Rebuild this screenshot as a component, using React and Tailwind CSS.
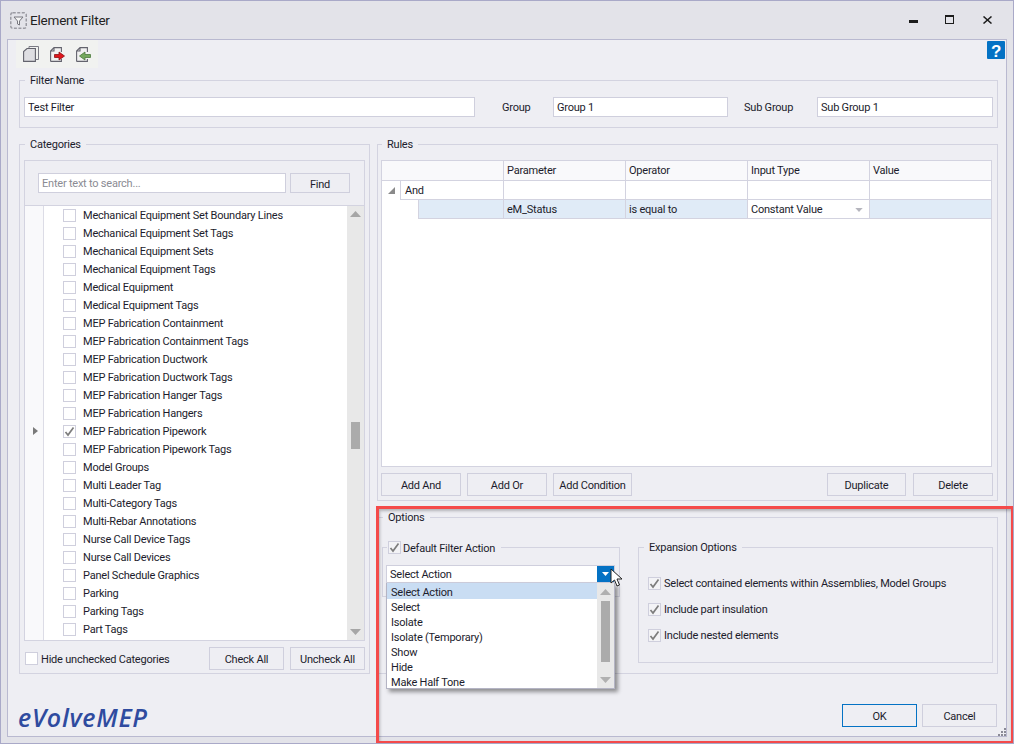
import React from "react";

const categories = [
  "Mechanical Equipment Set Boundary Lines",
  "Mechanical Equipment Set Tags",
  "Mechanical Equipment Sets",
  "Mechanical Equipment Tags",
  "Medical Equipment",
  "Medical Equipment Tags",
  "MEP Fabrication Containment",
  "MEP Fabrication Containment Tags",
  "MEP Fabrication Ductwork",
  "MEP Fabrication Ductwork Tags",
  "MEP Fabrication Hanger Tags",
  "MEP Fabrication Hangers",
  "MEP Fabrication Pipework",
  "MEP Fabrication Pipework Tags",
  "Model Groups",
  "Multi Leader Tag",
  "Multi-Category Tags",
  "Multi-Rebar Annotations",
  "Nurse Call Device Tags",
  "Nurse Call Devices",
  "Panel Schedule Graphics",
  "Parking",
  "Parking Tags",
  "Part Tags",
];

const actions = [
  "Select Action",
  "Select",
  "Isolate",
  "Isolate (Temporary)",
  "Show",
  "Hide",
  "Make Half Tone",
];

const Check = ({ checked, bg = "bg-white" }) => (
  <span className={`w-[13px] h-[13px] ${bg} shrink-0 border border-[#cfcfdd] flex items-center justify-center`}>
    {checked && (
      <svg width="11" height="11" viewBox="0 0 11 11">
        <path d="M1.5 6 L4 9 L9.5 1.5" fill="none" stroke="#7d7d7d" strokeWidth="1.7" />
      </svg>
    )}
  </span>
);

const Button = ({ children, className = "" }) => (
  <button className={`h-[23px] pt-[3px] border border-[#cfcfdd] bg-[#eeeef3] text-center whitespace-nowrap ${className}`}>
    {children}
  </button>
);

const Group = ({ legend, className = "", legendClass = "ml-[1px]", children }) => (
  <fieldset className={`border border-[#d3d3e0] min-w-0 ${className}`}>
    <legend className={`${legendClass} px-[5px] leading-[15px]`}>{legend}</legend>
    {children}
  </fieldset>
);

const TextInput = ({ value, className = "" }) => (
  <input
    readOnly
    value={value}
    className={`h-[20px] border border-[#cfcfdd] bg-white px-[3px] outline-none ${className}`}
  />
);

const UpArrow = ({ color = "#a6a6a6" }) => (
  <svg width="11" height="6" viewBox="0 0 11 6"><path d="M5.5 0 L11 6 H0 Z" fill={color} /></svg>
);
const DownArrow = ({ color = "#a6a6a6", w = 11, h = 6 }) => (
  <svg width={w} height={h} viewBox="0 0 11 6"><path d="M0 0 H11 L5.5 6 Z" fill={color} /></svg>
);

const PageIcon = ({ children }) => (
  <svg width="15" height="15" viewBox="0 0 15 15">
    <path d="M.6 14.4 V4 L4 .6 H11.4 V5 M.6 4 H4 V.6 M.6 14.4 H11.4 V12" fill="#f1f1f1" stroke="#63636d" strokeWidth="1.1" />
    {children}
  </svg>
);

const Toolbar = () => (
  <div className="h-[33px] flex items-start">
    <div className="ml-[8px] w-[82px] h-[28px] bg-[#f1f2f0] flex items-center gap-[11px] pl-[7px]">
      <svg width="16" height="16" viewBox="0 0 16 16">
        <path d="M6 2.5 V.5 H15.5 V13.5 H13" fill="none" stroke="#7b7b85" />
        <path d="M.6 15.4 V5.5 L4 2.5 H12.4 V15.4 Z" fill="#dedee2" stroke="#63636d" strokeWidth="1.1" />
      </svg>
      <PageIcon>
        <path d="M4.5 7.5 H9 V5 L14.5 9 L9 13 V10.5 H4.5 Z" fill="#e0161b" stroke="#8a1014" strokeWidth=".8" />
      </PageIcon>
      <PageIcon>
        <path d="M14.5 7.5 H9 V5 L3.5 9 L9 13 V10.5 H14.5 Z" fill="#74a85c" stroke="#4b7a3c" strokeWidth=".8" />
      </PageIcon>
    </div>
    <svg className="ml-auto mr-[1px] mt-[1px]" width="18" height="18" viewBox="0 0 18 18">
      <rect width="18" height="18" rx="1" fill="#0472c4" />
      <text x="9" y="15.5" textAnchor="middle" fontSize="17" fontWeight="700" fill="#fff" fontFamily="Liberation Sans">?</text>
    </svg>
  </div>
);

const Categories = () => (
  <Group legend="Categories" className="w-[351px] h-[537px] px-[4px]">
    <div className="mt-[8px] border border-[#d3d3e0] h-[481px]">
      <div className="h-[45px] flex items-center gap-[4px] pl-[13px] border-b border-[#d3d3e0]">
        <input
          readOnly
          placeholder="Enter text to search..."
          className="w-[248px] h-[20px] border border-[#cfcfdd] bg-white px-[3px] outline-none placeholder:text-[#8b8b93]"
        />
        <Button className="w-[60px] !h-[20px]">Find</Button>
      </div>
      <div className="flex h-[434px] bg-white">
        <div className="w-[19px] shrink-0 bg-[#f9f9fb] border-r border-[#dcdce6] relative">
          <svg className="absolute left-[8px] top-[221px]" width="5" height="8" viewBox="0 0 5 8"><path d="M0 0 L5 4 L0 8 Z" fill="#7a7a7a" /></svg>
        </div>
        <div className="flex-1 pl-[19px]">
          {categories.map((name) => (
            <div key={name} className="h-[18px] flex items-center gap-[7px]">
              <Check checked={name === "MEP Fabrication Pipework"} />
              <span className="pt-[2px]">{name}</span>
            </div>
          ))}
        </div>
        <div className="w-[17px] shrink-0 bg-[#e8e8e8] flex flex-col items-center pt-[5px] pb-[5px]">
          <UpArrow />
          <div className="w-[9px] h-[27px] bg-[#ababab] mt-[205px]" />
          <span className="mt-auto flex"><DownArrow /></span>
        </div>
      </div>
    </div>
    <div className="mt-[6px] flex items-center">
      <span className="ml-[1px]"><Check /></span>
      <span className="ml-[3px] pt-[4px]">Hide unchecked Categories</span>
      <Button className="ml-auto w-[75px]">Check All</Button>
      <Button className="ml-[6px] w-[75px]">Uncheck All</Button>
    </div>
  </Group>
);

const gridCell = "border-r border-b border-[#d3d3e0] flex items-center px-[3px] pt-[2px]";
const lastCell = "border-b border-[#d3d3e0] flex items-center px-[3px] pt-[2px]";

const Rules = () => (
  <Group legend="Rules" className="h-[364px] pl-[3px] pr-[4px]">
    <div className="mt-[8px] h-[307px] mr-[1px] bg-white border border-[#d3d3e0] grid grid-cols-[122px_122px_122px_122px_1fr] grid-rows-[20px_19px_19px] content-start">
      <div className={gridCell + " bg-[#f9f9fb]"} />
      <div className={gridCell + " bg-[#f9f9fb]"}>Parameter</div>
      <div className={gridCell + " bg-[#f9f9fb]"}>Operator</div>
      <div className={gridCell + " bg-[#f9f9fb]"}>Input Type</div>
      <div className={lastCell + " bg-[#f9f9fb]"}>Value</div>
      <div className="flex border-r border-[#d3d3e0]">
        <div className="w-[18px] flex items-center justify-center">
          <svg width="7" height="7" viewBox="0 0 7 7"><path d="M7 0 V7 H0 Z" fill="#8a8a8a" /></svg>
        </div>
        <div className="flex-1 border-l border-b border-[#d3d3e0] flex items-center pl-[4px] pt-[2px]">And</div>
      </div>
      <div className={gridCell} />
      <div className={gridCell} />
      <div className={gridCell} />
      <div className={lastCell} />
      <div className="flex border-r border-[#d3d3e0]">
        <div className="w-[36px]" />
        <div className="flex-1 border-l border-b border-[#d3d3e0] bg-[#e0ebf7]" />
      </div>
      <div className={gridCell + " bg-[#e0ebf7]"}>eM_Status</div>
      <div className={gridCell + " bg-[#e0ebf7]"}>is equal to</div>
      <div className={gridCell + " bg-white justify-between pr-[6px]"}>
        <span>Constant Value</span>
        <DownArrow color="#b5b5bd" w={8} h={4} />
      </div>
      <div className={lastCell + " bg-[#e0ebf7]"} />
    </div>
    <div className="mt-[6px] flex">
      <Button className="w-[80px]">Add And</Button>
      <Button className="ml-[6px] w-[80px]">Add Or</Button>
      <Button className="ml-[6px] w-[79px]">Add Condition</Button>
      <Button className="ml-auto w-[79px]">Duplicate</Button>
      <Button className="ml-[7px] w-[80px]">Delete</Button>
    </div>
  </Group>
);

const ActionDropdown = () => (
  <div className="absolute left-[3px] top-[10px] w-[229px] z-10">
    <div className="h-[18px] bg-white border border-[#cfcfdd] flex items-center pl-[3px]">
      <span className="pt-[2px]">Select Action</span>
      <span className="ml-auto h-full w-[17px] bg-[#0472c4] flex items-center justify-center">
        <DownArrow color="#fff" w={7} h={4} />
      </span>
    </div>
    <div className="h-[106px] bg-white border border-[#b4b4c4] border-t-0 flex shadow-[3px_3px_4px_rgba(0,0,0,0.4)]">
      <div className="flex-1">
        {actions.map((a, i) => (
          <div key={a} className={`pl-[4px] ${i === 0 ? "h-[16px] leading-[20px] bg-[#c9ddf3]" : "h-[15px] leading-[18px]"}`}>{a}</div>
        ))}
      </div>
      <div className="w-[17px] bg-[#e8e8e8] flex flex-col items-center pt-[6px] pb-[5px]">
        <UpArrow color="#b0b0b0" />
        <div className="w-[9px] h-[61px] bg-[#ababab] mt-[6px]" />
        <span className="mt-auto flex"><DownArrow color="#b0b0b0" /></span>
      </div>
    </div>
  </div>
);

const Options = () => (
  <Group legend="Options" className="h-[164px] mt-[9px] px-[4px]">
    <div className="mt-[15px] flex items-start">
      <fieldset className="border border-[#d3d3e0] w-[238px] h-[57px] min-w-0 relative">
        <legend className="ml-[4px] px-[1px] flex items-center gap-[2px] leading-[15px]">
          <Check checked bg="bg-[#f3f3f6]" />
          <span className="pr-[5px] pt-[2px] leading-[13px]">Default Filter Action</span>
        </legend>
        <ActionDropdown />
      </fieldset>
      <Group legend="Expansion Options" legendClass="ml-[5px]" className="ml-[18px] w-[355px] h-[123px]">
        <div className="mt-[22px] ml-[9px] flex flex-col gap-[13px]">
          <div className="flex items-center h-[13px] gap-[3px]"><Check checked bg="bg-[#f3f3f6]" /><span className="pt-[2px]">Select contained elements within Assemblies, Model Groups</span></div>
          <div className="flex items-center h-[13px] gap-[3px]"><Check checked bg="bg-[#f3f3f6]" /><span className="pt-[2px]">Include part insulation</span></div>
          <div className="flex items-center h-[13px] gap-[3px]"><Check checked bg="bg-[#f3f3f6]" /><span className="pt-[2px]">Include nested elements</span></div>
        </div>
      </Group>
    </div>
  </Group>
);

const App = () => {
  return (
    <div
      className="relative w-[1014px] h-[744px] overflow-hidden bg-[#e3e3e9] border border-[#a9a9c8] text-[11px] tracking-[-0.22px] text-[#1c1c2c] flex flex-col"
      style={{ fontFamily: 'Roboto, "Liberation Sans", sans-serif' }}
    >
      {/* title bar */}
      <div className="h-[38px] shrink-0 flex items-center">
        <svg className="ml-[9px]" width="17" height="17" viewBox="0 0 17 17">
          <rect x=".75" y=".75" width="15.5" height="15.5" rx="2" fill="none" stroke="#9b9ba3" strokeWidth="1.5" strokeDasharray="3 1.5" />
          <path d="M4 5 H13 L9.5 9 V13 L7.5 12 V9 Z" fill="#f4f4f4" stroke="#77777f" />
        </svg>
        <span className="ml-[3px] mt-[1px] text-[13.5px] tracking-[-0.2px] text-[#222]">Element Filter</span>
        <span className="ml-auto w-[9px] h-[3px] bg-[#1c1c1c] mt-[3px]" />
        <span className="ml-[27px] w-[9px] h-[9px] border border-[#1c1c1c] border-t-2 mb-[1px]" />
        <svg className="ml-[29px] mr-[21px] mb-[1px]" width="9" height="8" viewBox="0 0 9 8">
          <path d="M.5 .5 L8.5 7.5 M8.5 .5 L.5 7.5" stroke="#1c1c1c" strokeWidth="1.5" />
        </svg>
      </div>

      {/* dialog body */}
      <div className="w-[1000px] h-[698px] ml-[6px] border border-[#b9b9d0] bg-[#eeeef3] flex flex-col">
        <Toolbar />
        <div className="ml-[11px] w-[979px] flex flex-col">
          <Group legend="Filter Name" className="h-[55px] px-[4px]">
            <div className="mt-[9px] flex items-center">
              <TextInput value="Test Filter" className="w-[451px]" />
              <span className="ml-[27px] w-[51px] pt-[2px]">Group</span>
              <TextInput value="Group 1" className="w-[175px]" />
              <span className="ml-[16px] w-[73px] pt-[2px]">Sub Group</span>
              <TextInput value="Sub Group 1" className="w-[176px]" />
            </div>
          </Group>
          <div className="mt-[9px] flex gap-[7px]">
            <Categories />
            <div className="flex-1 min-w-0 flex flex-col">
              <Rules />
              <Options />
            </div>
          </div>
        </div>
        <div className="flex-1 ml-[10px] mr-[9px] flex items-end pb-[9px]">
          <span
            className="text-[25px] leading-[30px] -mb-[5px] italic font-semibold text-[#2f4b9f] tracking-[0.7px]"
            style={{ fontFamily: '"Open Sans", sans-serif' }}
          >
            eVolveMEP
          </span>
          <Button className="ml-auto w-[75px] !border-[#0472c4]">OK</Button>
          <Button className="ml-[5px] w-[75px]">Cancel</Button>
        </div>
      </div>

      {/* annotation over the screenshot */}
      <div className="absolute left-[375px] top-[505px] w-[638px] h-[238px] border-[3px] border-[#f44a4a] shadow-[inset_1px_2px_3px_rgba(0,0,0,0.25)] pointer-events-none z-20" />

      {/* mouse cursor */}
      <svg className="absolute left-[609px] top-[567px] z-30" width="13" height="20" viewBox="0 0 13 20">
        <path d="M1 1 V15 L4.5 12 L7 18 L9.5 17 L7 11 H12 Z" fill="#fff" stroke="#222" strokeWidth="1" />
      </svg>

      {/* resize grip */}
      <svg className="absolute left-[996px] top-[727px]" width="9" height="9" viewBox="0 0 9 9">
        <path d="M7 0h2v2H7zM4 3h2v2H4zM7 3h2v2H7zM1 6h2v2H1zM4 6h2v2H4zM7 6h2v2H7z" fill="#8a8a96" />
      </svg>
    </div>
  );
};

export default App;
